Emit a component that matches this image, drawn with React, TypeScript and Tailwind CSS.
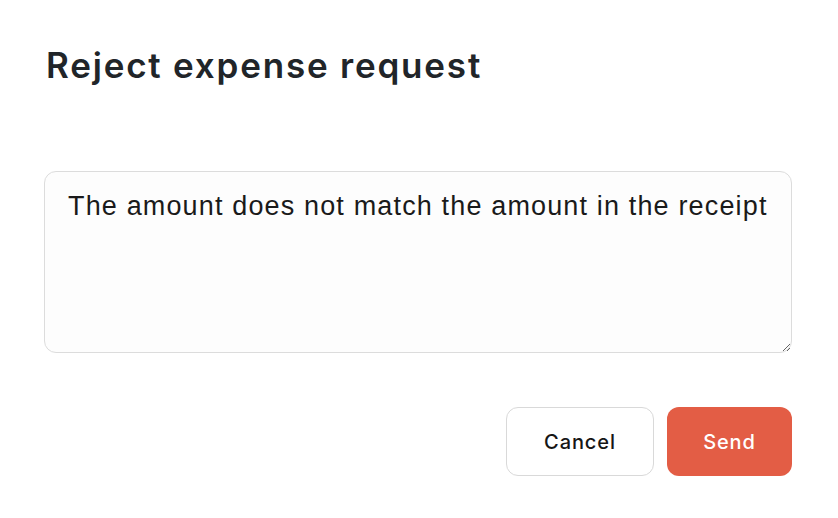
import React from 'react';

const App: React.FC = () => {
    return (
        <main className="w-[838px] h-[518px] bg-white overflow-hidden">
            <div className="pl-[44px] pr-[46px] pt-[42px]">
                {/* Title */}
                <h1 className="pl-[2px] text-[35px] leading-[46px] font-semibold tracking-[1.8px] text-[#212529] font-['Inter',sans-serif]">
                    Reject expense request
                </h1>

                {/* Reason */}
                <textarea
                    className="mt-[83px] block w-[748px] h-[182px] rounded-[12px] border border-[#dcdcdc] bg-[#fdfdfd] px-[23px] py-[17px] text-[27px] leading-[34px] tracking-[1.15px] text-[#1a1a1a] font-['Liberation_Sans',Arial,sans-serif] outline-none resize-y"
                    defaultValue="The amount does not match the amount in the receipt"
                />

                {/* Actions */}
                <div className="mt-[54px] flex justify-end gap-[13px]">
                    <button className="w-[148px] h-[69px] rounded-[12px] border border-[#d9d9d9] bg-white text-[20px] font-medium tracking-[0.9px] text-[#161616] font-['Inter',sans-serif]">
                        Cancel
                    </button>
                    <button className="w-[125px] h-[69px] rounded-[12px] bg-[#e35d45] text-[20px] font-medium tracking-[0.9px] text-white font-['Inter',sans-serif]">
                        Send
                    </button>
                </div>
            </div>
        </main>
    );
};

export default App;
